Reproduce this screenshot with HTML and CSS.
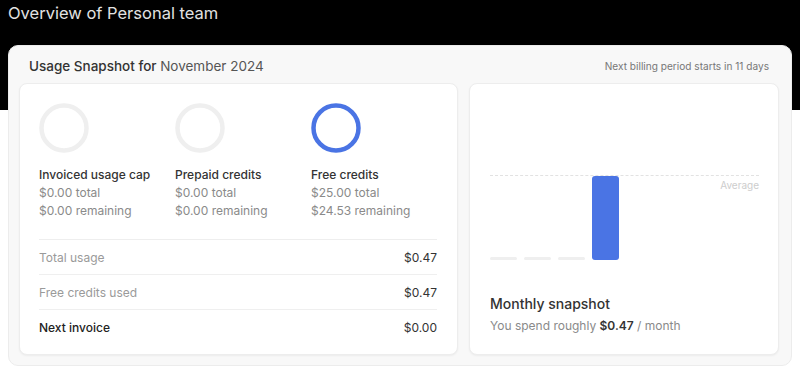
FILE: index.html
```html
<!DOCTYPE html>
<html lang="en">
<head>
  <meta charset="UTF-8" />
  <meta name="viewport" content="width=device-width, initial-scale=1.0" />
  <title>Overview of Personal team</title>
  <link rel="stylesheet" href="styles.css">
</head>
<body>

  <h1 class="page-title">Overview of Personal team</h1>

  <section class="usage">
    <div class="usage-head">
      <h2>Usage Snapshot for <span class="month">November 2024</span></h2>
      <span class="billing">Next billing period starts in 11 days</span>
    </div>

    <div class="usage-grid">
      <div class="panel credits">
        <div class="credit-list">
          <div class="credit">
            <svg class="ring" width="50" height="50" viewBox="0 0 50 50">
              <circle cx="25" cy="25" r="22.5" fill="none" stroke="#efefef" stroke-width="4.5" />
            </svg>
            <div class="credit-name">Invoiced usage cap</div>
            <div class="credit-sub">$0.00 total</div>
            <div class="credit-sub">$0.00 remaining</div>
          </div>
          <div class="credit">
            <svg class="ring" width="50" height="50" viewBox="0 0 50 50">
              <circle cx="25" cy="25" r="22.5" fill="none" stroke="#efefef" stroke-width="4.5" />
            </svg>
            <div class="credit-name">Prepaid credits</div>
            <div class="credit-sub">$0.00 total</div>
            <div class="credit-sub">$0.00 remaining</div>
          </div>
          <div class="credit">
            <svg class="ring" width="50" height="50" viewBox="0 0 50 50">
              <circle cx="25" cy="25" r="22.5" fill="none" stroke="#4a74e4" stroke-width="4.5" />
            </svg>
            <div class="credit-name">Free credits</div>
            <div class="credit-sub">$25.00 total</div>
            <div class="credit-sub">$24.53 remaining</div>
          </div>
        </div>

        <div class="totals">
          <div class="row"><span>Total usage</span><span class="amount">$0.47</span></div>
          <div class="row"><span>Free credits used</span><span class="amount">$0.47</span></div>
          <div class="row strong"><span>Next invoice</span><span class="amount">$0.00</span></div>
        </div>
      </div>

      <div class="panel snapshot">
        <div class="chart">
          <div class="average"><span>Average</span></div>
          <div class="bar empty"></div>
          <div class="bar empty"></div>
          <div class="bar empty"></div>
          <div class="bar" style="height: 84px"></div>
        </div>
        <h3>Monthly snapshot</h3>
        <p>You spend roughly <strong>$0.47</strong> / month</p>
      </div>
    </div>
  </section>

</body>
</html>
```

FILE: styles.css
```css
html {
  background: #fff;
}
body {
  font-family: Inter, "Noto Sans", sans-serif;
  background: linear-gradient(#000 0, #000 110px, #fff 110px) no-repeat;
  color: #333;
  margin: 0;
  padding: 0 8px;
}
.page-title {
  margin: 0;
  font-size: 16.5px;
  font-weight: 400;
  line-height: 26px;
  color: #e2e2e2;
}
.usage {
  margin-top: 19px;
  background: #f8f8f8;
  border: 1px solid #ececec;
  border-radius: 10px;
  padding: 0 12px 10px 10px;
}
.usage-head {
  display: flex;
  justify-content: space-between;
  align-items: center;
  padding: 10px 10px 7px;
}
.usage-head h2 {
  margin: 0;
  font-size: 13.5px;
  font-weight: 500;
  line-height: 20px;
  color: #333;
}
.month {
  font-weight: 400;
  color: #555;
}
.billing {
  font-size: 10.1px;
  color: #777;
}
.usage-grid {
  display: grid;
  grid-template-columns: 439px 1fr;
  gap: 11px;
}
.panel {
  background: white;
  border: 1px solid #ededed;
  border-radius: 8px;
  box-shadow: 0 1px 2px rgba(0,0,0,0.05);
}
.credits {
  padding: 19px 20px 9px 19px;
}
.credit-list {
  display: flex;
  padding-bottom: 20px;
  border-bottom: 1px solid #eee;
}
.credit {
  flex: none;
  width: 136px;
}
.ring {
  display: block;
  margin-bottom: 13px;
}
.credit-name {
  font-size: 12px;
  font-weight: 500;
  line-height: 18px;
  color: #333;
}
.credit-sub {
  font-size: 12px;
  line-height: 17.5px;
  color: #8a8a8a;
}
.row {
  display: flex;
  justify-content: space-between;
  align-items: center;
  height: 34px;
  font-size: 12px;
  color: #9a9a9a;
  border-bottom: 1px solid #efefef;
}
.row.strong {
  height: 35px;
  border-bottom: none;
  color: #222;
  font-weight: 500;
}
.amount {
  font-size: 12px;
  color: #333;
  font-weight: 400;
}
.snapshot {
  padding: 19px 19px 18px 20px;
}
.chart {
  position: relative;
  height: 157px;
  display: flex;
  align-items: flex-end;
  gap: 7px;
}
.average {
  position: absolute;
  left: 0;
  right: 0;
  top: 72px;
  border-top: 1px dashed #e2e2e2;
  text-align: right;
  line-height: 12px;
}
.average span {
  display: inline-block;
  margin-top: 3px;
  font-size: 10px;
  color: #cdcdcd;
}
.bar {
  width: 27px;
  background: #4a74e4;
  border-radius: 3px;
}
.bar.empty {
  height: 3px;
  background: #efefef;
  border-radius: 2px;
}
.snapshot h3 {
  margin: 34px 0 0;
  font-size: 14px;
  font-weight: 500;
  line-height: 20px;
  color: #333;
}
.snapshot p {
  margin: 3px 0 0;
  font-size: 12px;
  line-height: 18px;
  color: #8a8a8a;
}
.snapshot strong {
  color: #333;
  font-weight: 600;
}
```
